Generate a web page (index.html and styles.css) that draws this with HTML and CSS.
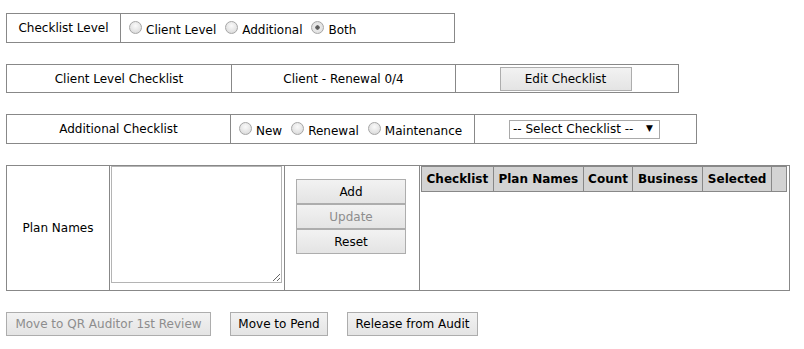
FILE: index.html
```html
<!DOCTYPE html>
<html lang="en">
<head>
  <meta charset="UTF-8">
  <title>Audit Checklist</title>
  <link rel="stylesheet" href="styles.css">
</head>
<body>
  <div class="panel level-row">
    <div class="cell center">Checklist Level</div>
    <div class="cell radios">
      <label><input type="radio" name="level"> Client Level</label>
      <label><input type="radio" name="level"> Additional</label>
      <label><input type="radio" name="level" checked> Both</label>
    </div>
  </div>

  <div class="panel client-row">
    <div class="cell center">Client Level Checklist</div>
    <div class="cell center">Client - Renewal 0/4</div>
    <div class="cell center"><button class="btn edit-btn">Edit Checklist</button></div>
  </div>

  <div class="panel additional-row">
    <div class="cell center">Additional Checklist</div>
    <div class="cell radios">
      <label><input type="radio" name="kind"> New</label>
      <label><input type="radio" name="kind"> Renewal</label>
      <label><input type="radio" name="kind"> Maintenance</label>
    </div>
    <div class="cell center">
      <span class="select-wrap">
        <select class="checklist-select">
          <option>-- Select Checklist --</option>
        </select>
      </span>
    </div>
  </div>

  <div class="panel plan-row">
    <div class="cell center">Plan Names</div>
    <div class="cell area-cell"><textarea class="plan-text"></textarea></div>
    <div class="cell action-cell">
      <button class="btn stack-btn">Add</button>
      <button class="btn stack-btn" disabled>Update</button>
      <button class="btn stack-btn">Reset</button>
    </div>
    <div class="cell grid-cell">
      <table class="plan-table">
        <thead>
          <tr>
            <th>Checklist</th>
            <th>Plan Names</th>
            <th>Count</th>
            <th>Business</th>
            <th>Selected</th>
            <th class="spacer"></th>
          </tr>
        </thead>
      </table>
    </div>
  </div>

  <div class="footer-actions">
    <button class="btn review-btn" disabled>Move to QR Auditor 1st Review</button>
    <button class="btn pend-btn">Move to Pend</button>
    <button class="btn release-btn">Release from Audit</button>
  </div>
</body>
</html>
```

FILE: styles.css
```css
* {
  box-sizing: border-box;
}

body {
  margin: 0;
  padding: 13px 0 0 6px;
  font-family: "DejaVu Sans", Verdana, sans-serif;
  font-size: 12px;
  color: #000;
  background: #fff;
}

.panel {
  display: grid;
  border: 1px solid #888;
  background: #fff;
}

.cell {
  display: flex;
  align-items: center;
  border-left: 1px solid #888;
}

.cell:first-child {
  border-left: none;
}

.center {
  justify-content: center;
}

.level-row {
  width: 449px;
  height: 30px;
  grid-template-columns: 113px 1fr;
}

.client-row {
  width: 673px;
  height: 29px;
  margin-top: 21px;
  grid-template-columns: 224px 224px 1fr;
}

.additional-row {
  width: 691px;
  height: 30px;
  margin-top: 21px;
  grid-template-columns: 223px 244px 1fr;
}

.plan-row {
  width: 784px;
  height: 126px;
  margin-top: 21px;
  grid-template-columns: 102px 175px 135px 1fr;
}

.radios {
  padding-left: 8px;
  padding-top: 3px;
  gap: 9px;
}

.radios label {
  display: flex;
  align-items: center;
  gap: 4px;
}

input[type="radio"] {
  appearance: none;
  margin: 0;
  width: 13px;
  height: 13px;
  border-radius: 50%;
  border: 1px solid #a6a6a6;
  background: radial-gradient(circle at 50% 35%, #fafafa 0%, #e4e4e4 60%, #d2d2d2 100%);
  position: relative;
  top: -2px;
}

input[type="radio"]:checked {
  background: radial-gradient(circle, #555 0%, #666 25%, #eaeaea 32%, #dadada 100%);
}

.btn {
  font-family: inherit;
  font-size: 12px;
  color: #000;
  height: 24px;
  padding: 0 4px;
  border: 1px solid #adadad;
  border-radius: 0;
  background: linear-gradient(#f2f2f2, #e4e4e4);
  white-space: nowrap;
}

.btn:disabled {
  color: #8d8d8d;
}

.edit-btn {
  width: 132px;
  margin-right: 3px;
}

.select-wrap {
  position: relative;
  display: inline-block;
  margin-right: 2px;
}

.checklist-select {
  appearance: none;
  font-family: inherit;
  font-size: 12px;
  color: #000;
  width: 151px;
  height: 19px;
  padding: 0 0 0 3px;
  border: 1px solid #a9a9a9;
  border-radius: 0;
  background: #fff;
}

.select-wrap::after {
  content: "▼";
  position: absolute;
  right: 7px;
  top: 3px;
  font-size: 9px;
  pointer-events: none;
}

.area-cell {
  align-items: flex-start;
  padding: 0 1px;
}

.plan-text {
  width: 171px;
  height: 117px;
  margin: 0;
  border: 1px solid #b4b4b4;
  resize: both;
}

.action-cell {
  flex-direction: column;
  align-items: flex-start;
  padding: 13px 0 0 11px;
}

.stack-btn {
  width: 110px;
  height: 25px;
}

.grid-cell {
  align-items: flex-start;
  padding: 0 0 0 1px;
}

.plan-table {
  border-collapse: collapse;
  width: 366px;
  border: 1px solid #888;
}

.plan-table th {
  height: 25px;
  padding: 0 4px;
  background: #d3d3d3;
  border: 1px solid #888;
  font-size: 12px;
  font-weight: bold;
  white-space: nowrap;
  text-align: center;
}

.plan-table .spacer {
  width: 15px;
  padding: 0;
}

.footer-actions {
  display: flex;
  gap: 19px;
  margin-top: 21px;
}

.review-btn {
  width: 205px;
}

.pend-btn {
  width: 98px;
}

.release-btn {
  width: 131px;
}
```
